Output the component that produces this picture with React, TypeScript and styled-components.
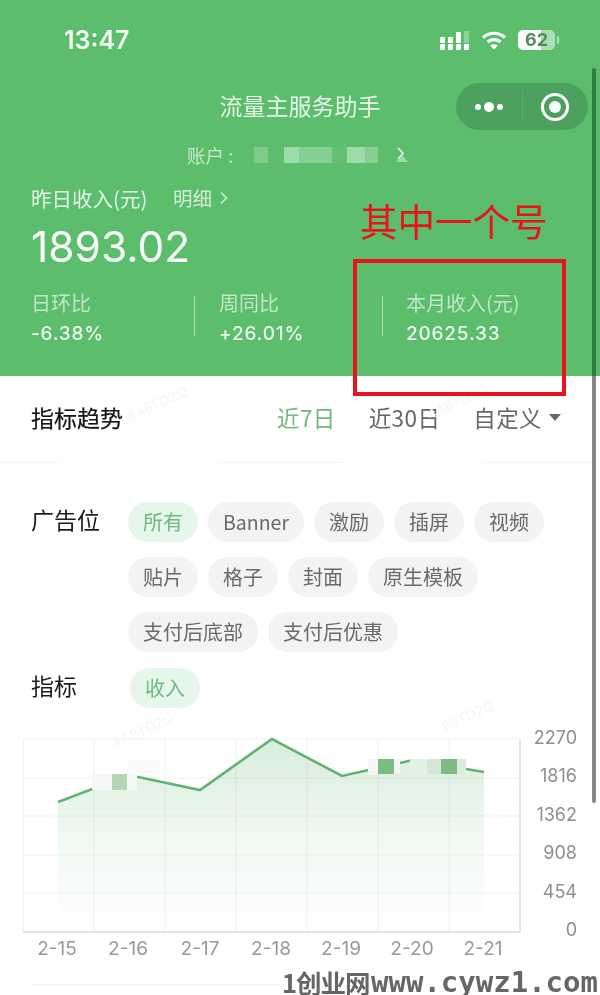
import React from "react";
import styled, { createGlobalStyle } from "styled-components";

const CJK = `"Noto Sans CJK SC", "Noto Sans", sans-serif`;
const LATIN = `"Inter", "Noto Sans CJK SC", sans-serif`;

const Global = createGlobalStyle`
  html, body { margin: 0; padding: 0; background: #fff; }
  body { font-family: ${CJK}; }
`;

const Page = styled.div`
  position: relative;
  width: 600px;
  height: 995px;
  overflow: hidden;
  background: #fff;
  filter: blur(0.35px);
`;

const Header = styled.header`
  height: 376px;
  background: #5cbd6d;
  color: #fff;
  display: flex;
  flex-direction: column;
`;

const StatusBar = styled.div`
  height: 83px;
  display: flex;
  align-items: flex-start;
  justify-content: space-between;
  padding: 26px 45px 0 64px;
  box-sizing: border-box;
`;

const Clock = styled.span`
  font: 600 25px/28px ${LATIN};
  color: #f4fbf5;
`;

const StatusIcons = styled.div`
  display: flex;
  align-items: center;
  gap: 11px;
  padding-top: 4px;
`;

const Battery = styled.div`
  width: 37px;
  height: 20px;
  border-radius: 5px;
  background: linear-gradient(90deg, #fff 0 62%, #a9dfb3 62% 100%);
  color: #4f8c5e;
  font: 700 18px/20px ${LATIN};
  text-align: center;
  position: relative;
  &::after {
    content: "";
    position: absolute;
    right: -4px;
    top: 6px;
    width: 2px;
    height: 8px;
    border-radius: 1px;
    background: #a9dfb3;
  }
`;

const NavBar = styled.div`
  height: 47px;
  position: relative;
  display: flex;
  align-items: flex-start;
  justify-content: center;
`;

const Title = styled.h1`
  margin: 0;
  font: 400 23px/44px ${CJK};
  color: #e6f6e9;
`;

const Capsule = styled.div`
  position: absolute;
  left: 456px;
  top: 0;
  width: 132px;
  height: 47px;
  border-radius: 24px;
  background: #4da15f;
  display: flex;
  align-items: center;
`;

const CapsuleSide = styled.div`
  flex: 1;
  height: 100%;
  display: flex;
  align-items: center;
  justify-content: center;
`;

const CapsuleLine = styled.div`
  width: 1px;
  height: 30px;
  background: #5cad6c;
`;

const AccountRow = styled.div`
  margin-top: 15px;
  padding-left: 187px;
  display: flex;
  align-items: center;
  height: 20px;
`;

const AccountLabel = styled.span`
  width: 67px;
  font: 400 18.5px/20px ${CJK};
  white-space: pre;
  color: #c5e9cc;
`;

const Blur = styled.span<{ $w: number; $c: string }>`
  width: ${(p) => p.$w}px;
  height: 16px;
  background: ${(p) => p.$c};
`;

const IncomeRow = styled.div`
  margin-top: 20px;
  padding-left: 31px;
  display: flex;
  align-items: center;
  height: 26px;
`;

const IncomeLabel = styled.span`
  width: 142px;
  font: 400 20.5px/26px ${CJK};
  color: #e4f5e7;
`;

const DetailLink = styled.span`
  font: 400 19.5px/26px ${CJK};
  color: #d2eed8;
  display: flex;
  align-items: center;
  gap: 8px;
`;

const Amount = styled.div`
  margin-top: 11px;
  padding-left: 31px;
  font: 400 42.5px/50px ${LATIN};
  color: #f8fdf9;
`;

const Stats = styled.div`
  margin-top: 18px;
  display: flex;
  padding-left: 31px;
`;

const Stat = styled.div<{ $w: number }>`
  width: ${(p) => p.$w}px;
  height: 40px;
  display: flex;
  flex-direction: column;
`;

const StatDivider = styled.div`
  width: 1px;
  height: 40px;
  margin-top: 6px;
  background: #a9dcb3;
`;

const StatLabel = styled.span`
  font: 400 20px/26px ${CJK};
  color: #bfe6c7;
`;

const StatValue = styled.span`
  margin-top: 6px;
  font: 500 19px/24px ${LATIN};
  letter-spacing: 0.8px;
  color: #ecf8ee;
`;

const TabsRow = styled.div`
  height: 87px;
  box-sizing: border-box;
  margin-right: 8px;
  padding: 0 31px 4px 31px;
  border-bottom: 1px solid #f1f1f1;
  display: flex;
  align-items: center;
`;

const SectionTitle = styled.h2`
  margin: 0 auto 0 0;
  font: 400 23px/30px ${CJK};
  color: #141414;
  -webkit-text-stroke: 0.2px #141414;
`;

const Tab = styled.span<{ $active?: boolean; $gap: number }>`
  margin-left: ${(p) => p.$gap}px;
  font: 400 22.5px/30px ${CJK};
  letter-spacing: 0.4px;
  color: ${(p) => (p.$active ? "#6fb981" : "#666")};
  display: flex;
  align-items: center;
`;

const Caret = styled.span`
  margin-left: 7px;
  width: 0;
  height: 0;
  border-left: 6.5px solid transparent;
  border-right: 6.5px solid transparent;
  border-top: 7px solid #666;
`;

const Filters = styled.section`
  padding: 39px 0 0 31px;
  display: grid;
  grid-template-columns: 97px 1fr;
  row-gap: 16px;
`;

const FilterLabel = styled.span`
  font: 400 23px/30px ${CJK};
  color: #1c1c1c;
  padding-top: 2px;
`;

const Pills = styled.div<{ $indent?: number }>`
  display: flex;
  flex-wrap: wrap;
  gap: 15px 10px;
  width: 430px;
  padding-left: ${(p) => p.$indent ?? 0}px;
`;

const Pill = styled.span<{ $active?: boolean; $size?: number }>`
  height: 40px;
  box-sizing: border-box;
  padding: 0 15px;
  border-radius: 20px;
  font: 400 ${(p) => p.$size ?? 20}px/40px ${CJK};
  background: ${(p) => (p.$active ? "#e6f6ea" : "#f3f3f3")};
  color: ${(p) => (p.$active ? "#6fb981" : "#6a6a6a")};
`;

const ChartWrap = styled.div`
  margin-top: 17px;
  height: 250px;
`;

const Scrollbar = styled.div`
  position: absolute;
  left: 592px;
  top: 68px;
  width: 4px;
  height: 735px;
  border-radius: 2px;
  background: linear-gradient(180deg, #2f7d45 0 308px, #878787 308px 100%);
`;

const Annotation = styled.div`
  position: absolute;
  left: 360px;
  top: 197px;
  font: 400 37.5px/46px "Noto Sans CJK SC", serif;
  color: #e8141c;
  white-space: nowrap;
`;

const RedBox = styled.div`
  position: absolute;
  left: 353px;
  top: 259px;
  width: 213px;
  height: 137px;
  box-sizing: border-box;
  border: 4px solid #e8141c;
`;

const Faint = styled.span<{ $x: number; $y: number }>`
  position: absolute;
  left: ${(p) => p.$x}px;
  top: ${(p) => p.$y}px;
  font: 400 14px/16px ${LATIN};
  color: #f6f6f6;
  transform: rotate(-24deg);
  white-space: nowrap;
`;

const Smudge = styled.div<{ $x: number; $w: number }>`
  position: absolute;
  left: ${(p) => p.$x}px;
  top: 458px;
  width: ${(p) => p.$w}px;
  height: 10px;
  background: #fefefe;
`;

const Mark = styled.div`
  position: absolute;
  left: 282px;
  bottom: 0;
  height: 26px;
  width: 318px;
  background: #fff;
  display: flex;
  align-items: center;
  color: #666;
  white-space: nowrap;
`;

const MarkCn = styled.span`
  width: 89px;
  font: 700 25.5px/26px "Noto Sans CJK SC", sans-serif;
  letter-spacing: -1px;
`;

const MarkEn = styled.span`
  font: 700 29px/26px "DejaVu Sans Mono", monospace;
`;

const FootLine = styled.div`
  position: absolute;
  left: 30px;
  bottom: 10px;
  width: 250px;
  height: 1px;
  background: #f2f2f2;
`;

const Signal = () => (
  <svg width="30" height="20" viewBox="0 0 30 20">
    <g fill="#fff">
      <rect x="0" y="7" width="5" height="6" rx="1" />
      <rect x="0" y="14" width="5" height="6" rx="1" />
      <rect x="8" y="7" width="5" height="6" rx="1" />
      <rect x="8" y="14" width="5" height="6" rx="1" />
      <rect x="16" y="2" width="5" height="11" rx="1" />
      <rect x="16" y="14" width="5" height="6" rx="1" />
      <rect x="24" y="14" width="5" height="6" rx="1" />
    </g>
    <rect x="24" y="1" width="5" height="12" rx="1" fill="#8fd39c" />
  </svg>
);

const Wifi = () => (
  <svg width="26" height="20" viewBox="0 0 26 20" fill="none" stroke="#fff" strokeWidth="3.2">
    <path d="M2 7.5C8 1.8 18 1.8 24 7.5" />
    <path d="M6.5 12C10 8.8 16 8.8 19.5 12" />
    <path d="M13 19.5L9.3 15.6C11.4 13.9 14.6 13.9 16.7 15.6Z" fill="#fff" stroke="none" />
  </svg>
);

const Dots = () => (
  <svg width="30" height="12" viewBox="0 0 30 12" fill="#fff">
    <circle cx="4" cy="6" r="3" />
    <circle cx="15" cy="6" r="5" />
    <circle cx="26" cy="6" r="3" />
  </svg>
);

const Target = () => (
  <svg width="30" height="30" viewBox="0 0 30 30">
    <circle cx="15" cy="15" r="12.5" fill="none" stroke="#fff" strokeWidth="3" />
    <circle cx="15" cy="15" r="6" fill="#fff" />
  </svg>
);

const Chevron = ({ c }: { c: string }) => (
  <svg width="8" height="14" viewBox="0 0 8 14" fill="none" stroke={c} strokeWidth="1.6">
    <path d="M1 1.5L6.5 7L1 12.5" />
  </svg>
);

const ArrowBox = styled.svg`
  margin-left: 17px;
`;

const AccountArrow = () => (
  <ArrowBox width="14" height="16" viewBox="0 0 14 16">
    <path d="M1 15L13 15L8 9Z" fill="#9ddcaa" />
    <path d="M3 1L8 6.5L3 12" fill="none" stroke="#e3f5e7" strokeWidth="1.8" />
  </ArrowBox>
);

const xLabels = ["2-15", "2-16", "2-17", "2-18", "2-19", "2-20", "2-21"];
const xCenters = [57, 128, 200, 271, 341, 412, 483];
const yLabels = ["2270", "1816", "1362", "908", "454", "0"];
const gridY = [739, 778, 816, 855, 893];
const gridX = [94, 165, 236, 307, 378, 449];
const line = "58,802 129,775 200,790 272,739 342,776 413,760 484,772";

const TOP = 725;

const ChartSvg = styled.svg`
  display: block;
`;

const Chart = () => (
  <ChartSvg width="600" height="250" viewBox={`0 ${TOP} 600 250`}>
    <defs>
      <linearGradient id="area" x1="0" y1="739" x2="0" y2="932" gradientUnits="userSpaceOnUse">
        <stop offset="0" stopColor="#6cbd7c" stopOpacity="0.27" />
        <stop offset="0.5" stopColor="#6cbd7c" stopOpacity="0.1" />
        <stop offset="1" stopColor="#6cbd7c" stopOpacity="0" />
      </linearGradient>
    </defs>
    {gridY.map((y) => (
      <line key={y} x1="23" x2="520" y1={y} y2={y} stroke="#f1f1f1" strokeWidth="1" />
    ))}
    {gridX.map((x) => (
      <line key={x} x1={x} x2={x} y1="739" y2="932" stroke="#efefef" strokeWidth="1" />
    ))}
    <line x1="23.5" x2="23.5" y1="739" y2="932" stroke="#f1f1f1" />
    <line x1="520" x2="520" y1="739" y2="933" stroke="#dcdcdc" strokeWidth="1.5" />
    <line x1="23" x2="520" y1="932" y2="932" stroke="#dcdcdc" strokeWidth="1.5" />
    <polygon points={`58,932 ${line} 484,932`} fill="url(#area)" />
    <polyline points={line} fill="none" stroke="#63b173" strokeWidth="2.6" strokeLinejoin="miter" />
    <rect x="92" y="774" width="20" height="16" fill="#f6f6f6" />
    <rect x="112" y="774" width="15" height="16" fill="#b3d6b6" />
    <rect x="127" y="772" width="10" height="18" fill="#f3f8f3" />
    <rect x="128" y="760" width="32" height="14" fill="#fafafa" />
    <rect x="368" y="759" width="10" height="16" fill="#f4f7f4" />
    <rect x="378" y="759" width="16" height="15" fill="#7dbb82" />
    <rect x="394" y="759" width="6" height="15" fill="#f2f7f2" />
    <rect x="410" y="759" width="17" height="15" fill="#e4f1e5" />
    <rect x="427" y="759" width="14" height="15" fill="#d5e7d6" />
    <rect x="441" y="759" width="16" height="15" fill="#7dbb82" />
    <rect x="457" y="759" width="9" height="15" fill="#dcebdc" />
    <g fontFamily="Inter, sans-serif" fontSize="18" fill="#8f8f8f" textAnchor="end">
      {yLabels.map((t, i) => (
        <text key={t} x="577" y={744 + i * 38.4}>
          {t}
        </text>
      ))}
    </g>
    <g fontFamily="Inter, sans-serif" fontSize="19" fill="#999" textAnchor="middle">
      {xLabels.map((t, i) => (
        <text key={t} x={xCenters[i]} y="955">
          {t}
        </text>
      ))}
    </g>
  </ChartSvg>
);

export default function App() {
  return (
    <>
      <Global />
      <Page>
        <Header>
          <StatusBar>
            <Clock>13:47</Clock>
            <StatusIcons>
              <Signal />
              <Wifi />
              <Battery>62</Battery>
            </StatusIcons>
          </StatusBar>
          <NavBar>
            <Title>流量主服务助手</Title>
            <Capsule>
              <CapsuleSide>
                <Dots />
              </CapsuleSide>
              <CapsuleLine />
              <CapsuleSide>
                <Target />
              </CapsuleSide>
            </Capsule>
          </NavBar>
          <AccountRow>
            <AccountLabel>账户 :</AccountLabel>
            <Blur $w={14} $c="#7fcb8e" />
            <Blur $w={16} $c="#5cbd6d" />
            <Blur $w={15} $c="#9ddcaa" />
            <Blur $w={33} $c="#85cf94" />
            <Blur $w={15} $c="#63c074" />
            <Blur $w={18} $c="#9ddcaa" />
            <Blur $w={13} $c="#85cf94" />
            <AccountArrow />
          </AccountRow>
          <IncomeRow>
            <IncomeLabel>昨日收入(元)</IncomeLabel>
            <DetailLink>
              明细 <Chevron c="#d2eed8" />
            </DetailLink>
          </IncomeRow>
          <Amount>1893.02</Amount>
          <Stats>
            <Stat $w={163}>
              <StatLabel>日环比</StatLabel>
              <StatValue>-6.38%</StatValue>
            </Stat>
            <StatDivider />
            <Stat $w={24} />
            <Stat $w={163}>
              <StatLabel>周同比</StatLabel>
              <StatValue>+26.01%</StatValue>
            </Stat>
            <StatDivider />
            <Stat $w={23} />
            <Stat $w={160}>
              <StatLabel>本月收入(元)</StatLabel>
              <StatValue>20625.33</StatValue>
            </Stat>
          </Stats>
        </Header>
        <TabsRow>
          <SectionTitle>指标趋势</SectionTitle>
          <Tab $active $gap={0}>
            近7日
          </Tab>
          <Tab $gap={33}>近30日</Tab>
          <Tab $gap={33}>
            自定义
            <Caret />
          </Tab>
        </TabsRow>
        <Filters>
          <FilterLabel>广告位</FilterLabel>
          <Pills>
            <Pill $active>所有</Pill>
            <Pill $size={19.5}>Banner</Pill>
            <Pill>激励</Pill>
            <Pill>插屏</Pill>
            <Pill>视频</Pill>
            <Pill>贴片</Pill>
            <Pill>格子</Pill>
            <Pill>封面</Pill>
            <Pill>原生模板</Pill>
            <Pill>支付后底部</Pill>
            <Pill>支付后优惠</Pill>
          </Pills>
          <FilterLabel>指标</FilterLabel>
          <Pills $indent={2}>
            <Pill $active>收入</Pill>
          </Pills>
        </Filters>
        <ChartWrap>
          <Chart />
        </ChartWrap>
        <Smudge $x={61} $w={161} />
        <Smudge $x={343} $w={143} />
        <Faint $x={124} $y={396}>
          4ABTD2Q
        </Faint>
        <Faint $x={425} $y={394}>
          4ABTD2Q
        </Faint>
        <Faint $x={110} $y={722}>
          4ABTD2Q
        </Faint>
        <Faint $x={440} $y={708}>
          8BTD2Q
        </Faint>
        <FootLine />
        <Mark>
          <MarkCn>1创业网</MarkCn>
          <MarkEn>www.cywz1.com</MarkEn>
        </Mark>
        <Scrollbar />
        <Annotation>其中一个号</Annotation>
        <RedBox />
      </Page>
    </>
  );
}
